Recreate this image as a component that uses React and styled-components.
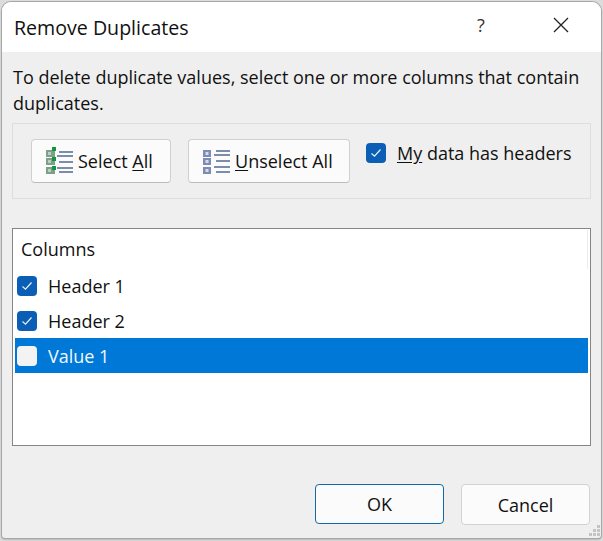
import React from 'react';
import styled, { createGlobalStyle } from 'styled-components';

const Global = createGlobalStyle`
  html, body { margin: 0; padding: 0; background: #dcdcdc; }
  body { font-family: "Open Sans", "Noto Sans", "Liberation Sans", sans-serif; color: #111; overflow: hidden; }
`;

const Page = styled.div`
  width: 603px;
  height: 541px;
  padding: 2px 2px 3px 2px;
  box-sizing: border-box;
  background: #dcdcdc;
`;
const Dialog = styled.div`
  position: relative;
  height: 536px;
  border-radius: 9px 9px 3px 3px;
  background: #efefef;
  box-shadow: 0 0 0 1px #a8a8a8, 0 1px 2px #777;
  overflow: hidden;
  display: flex;
  flex-direction: column;
`;
const TitleBar = styled.div`
  height: 50px;
  flex: none;
  background: #fff;
  display: flex;
  align-items: center;
  padding: 0 0 0 12px;
  font-size: 19.6px;
  color: #111;
`;
const Title = styled.div`
  flex: 1;
`;
const Help = styled.div`
  width: 20px;
  text-align: center;
  font-size: 18px;
  margin-right: 62px;
  padding-bottom: 4px;
  color: #333;
`;
const Close = styled.div`
  width: 16px;
  height: 16px;
  margin-right: 32px;
  margin-bottom: 4px;
  display: flex;
`;
const Body = styled.div`
  flex: 1;
  display: flex;
  flex-direction: column;
  padding: 0 10px;
  position: relative;
`;
const Description = styled.p`
  margin: 13px 0 0 1px;
  font-size: 18px;
  line-height: 25.5px;
  height: 58px;
  color: #111;
  white-space: nowrap;
`;
const Panel = styled.div`
  height: 76px;
  box-sizing: border-box;
  border: 1px solid #dedede;
  display: flex;
  align-items: flex-start;
  padding: 15px 0 0 18px;
`;
const ToolButton = styled.div`
  box-sizing: border-box;
  width: ${p => p.$w}px;
  height: 44px;
  margin-right: ${p => p.$mr}px;
  background: #fbfbfb;
  border: 1px solid #d0d0d0;
  border-bottom-color: #bcbcbc;
  border-radius: 4px;
  display: flex;
  align-items: center;
  padding-left: ${p => p.$pl}px;
  font-size: 18px;
  gap: ${p => p.$gap}px;
  color: #111;
`;
const Key = styled.span`
  text-decoration: underline;
  text-underline-offset: 2px;
`;
const Box = styled.div`
  box-sizing: border-box;
  width: 20px;
  height: 20px;
  flex: none;
  border-radius: 4px;
  background: ${p => (p.$checked ? '#0a5eb5' : '#f3f3f3')};
  display: flex;
  align-items: center;
  justify-content: center;
`;
const HeaderToggle = styled.div`
  display: flex;
  align-items: center;
  gap: 11px;
  margin-top: 4px;
  font-size: 18px;
  color: #111;
  line-height: 20px;
`;
const List = styled.div`
  position: relative;
  margin-top: 29px;
  height: 218px;
  box-sizing: border-box;
  border: 1px solid #858585;
  background: #fff;
  padding: 1px 2px;
`;
const ListHeader = styled.div`
  height: 38px;
  padding: 7px 0 0 6px;
  box-sizing: border-box;
  font-size: 18px;
  line-height: 24px;
  color: #111;
`;
const ScrollEdge = styled.div`
  position: absolute;
  right: 2px;
  top: 1px;
  width: 1px;
  height: 39px;
  background: #ececec;
`;
const Row = styled.div`
  height: 35px;
  display: flex;
  align-items: center;
  gap: 11px;
  padding-left: 2px;
  box-sizing: border-box;
  font-size: 18px;
  background: ${p => (p.$selected ? '#0078d7' : 'transparent')};
  color: ${p => (p.$selected ? '#f2f8fd' : '#111')};
`;
const Footer = styled.div`
  display: flex;
  justify-content: flex-end;
  gap: 17px;
  margin-top: 38px;
  padding-right: 1px;
`;
const ActionButton = styled.div`
  box-sizing: border-box;
  width: 129px;
  height: ${p => (p.$primary ? 40 : 41)}px;
  background: #fbfbfb;
  border-radius: 4px;
  border: 1px solid ${p => (p.$primary ? '#0f6ca8' : '#d2d2d2')};
  display: flex;
  align-items: center;
  justify-content: center;
  font-size: 18px;
  color: #111;
`;
const Grip = styled.svg`
  position: absolute;
  right: 1px;
  bottom: 2px;
`;

const Check = () => (
  <svg width="12" height="10" viewBox="0 0 12 10" fill="none">
    <path d="M1.5 5.5 L4.5 8.2 L10.5 1.5" stroke="#e8f1fa" strokeWidth="1.2" />
  </svg>
);

const IconLines = ({ ys }) =>
  ys.map((y, i) => (
    <rect key={y} x={i % 2 ? 11 : 13} y={y} width={i % 2 ? 16 : 14} height="2" fill="#7c8cab" />
  ));

const SelectIcon = () => (
  <svg width="28" height="28" viewBox="0 0 28 28">
    {[
      [3, 0],
      [11, 10],
      [20, 19],
    ].map(([y, g]) => (
      <g key={y}>
        <rect x="0" y={y} width="9" height="7" fill="#7f9f8a" />
        <rect x="2" y={y + 2} width="3" height="3" fill="#b9d2be" />
        <rect x="6" y={g} width="4" height="4" fill="#0c9a3c" />
      </g>
    ))}
    <IconLines ys={[4, 8, 14, 20, 24]} />
  </svg>
);

const UnselectIcon = () => (
  <svg width="28" height="28" viewBox="0 0 28 28">
    {[3, 11, 20].map(y => (
      <g key={y}>
        <rect x="0" y={y} width="8" height="7" fill="#7c8cb4" />
        <rect x="2.5" y={y + 2} width="3" height="3" fill="#d6dbe8" />
      </g>
    ))}
    <IconLines ys={[3, 7, 13, 19, 24]} />
  </svg>
);

const gripDots = [[8, 0], [4, 4], [8, 4], [0, 8], [4, 8], [8, 8]];

export default function App() {
  return (
    <Page>
      <Global />
      <Dialog>
        <TitleBar>
          <Title>Remove Duplicates</Title>
          <Help>?</Help>
          <Close>
            <svg width="16" height="16" viewBox="0 0 16 16">
              <path d="M1 1 L15 15 M15 1 L1 15" stroke="#222" strokeWidth="1.3" />
            </svg>
          </Close>
        </TitleBar>
        <Body>
          <Description>
            To delete duplicate values, select one or more columns that contain
            <br />
            duplicates.
          </Description>
          <Panel>
            <ToolButton $w={140} $mr={17} $pl={14} $gap={4}>
              <SelectIcon />
              <span>Select <Key>A</Key>ll</span>
            </ToolButton>
            <ToolButton $w={162} $mr={16} $pl={14} $gap={4}>
              <UnselectIcon />
              <span><Key>U</Key>nselect All</span>
            </ToolButton>
            <HeaderToggle>
              <Box $checked><Check /></Box>
              <span><Key>My</Key> data has headers</span>
            </HeaderToggle>
          </Panel>
          <List>
            <ScrollEdge />
            <ListHeader>Columns</ListHeader>
            <Row><Box $checked><Check /></Box>Header 1</Row>
            <Row><Box $checked><Check /></Box>Header 2</Row>
            <Row $selected><Box />Value 1</Row>
          </List>
          <Footer>
            <ActionButton $primary>OK</ActionButton>
            <ActionButton>Cancel</ActionButton>
          </Footer>
        </Body>
        <Grip width="11" height="11" viewBox="0 0 11 11">
          {gripDots.map(([x, y]) => (
            <rect key={`${x}-${y}`} x={x} y={y} width="3" height="3" fill="#c4c4c4" />
          ))}
        </Grip>
      </Dialog>
    </Page>
  );
}
